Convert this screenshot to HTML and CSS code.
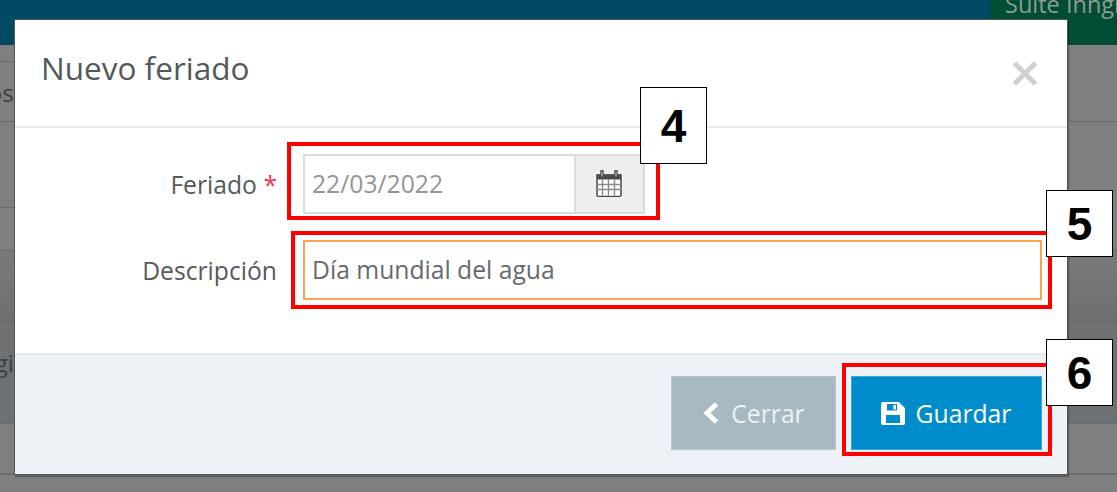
FILE: index.html
```html
<!DOCTYPE html>
<html lang="en">
<head>
  <meta charset="UTF-8">
  <title>Nuevo feriado</title>
  <link rel="stylesheet" href="styles.css">
</head>
<body>
  <div class="backdrop">
    <div class="topbar"><div class="suite">Suite Inngr</div></div>
    <div class="bg-row h16"><div class="stub"></div></div>
    <div class="bg-row h60 line"><span class="peek">Dos</span></div>
    <div class="bg-row h86"><div class="stub"></div></div>
    <div class="bg-row h43 line"></div>
    <div class="bg-row h71 fade"></div>
    <div class="bg-row h102 band line"><span class="peek peek-low">Regi</span></div>
    <div class="bg-row h51 foot"></div>
    <div class="bg-row h10"></div>
  </div>

  <div class="modal">
    <div class="modal-header">
      <h4>Nuevo feriado</h4>
      <svg class="close" width="26" height="27" viewBox="0 0 26 27"><path d="M2.500 3 23.500 24M23.500 3 2.500 24" stroke="#d0d0d0" stroke-width="5" fill="none"/></svg>
    </div>
    <div class="modal-body">
      <div class="form-row">
        <label>Feriado <span class="req">*</span></label>
        <div class="input-group">
          <div class="input muted">22/03/2022</div>
          <div class="addon">
            <svg class="cal" width="26" height="27" viewBox="0 0 26 27">
              <path d="M1 5h24v20a1.500 1.500 0 0 1-1.500 1.500h-21A1.500 1.500 0 0 1 1 25z" fill="#fff" stroke="#4a4a4a" stroke-width="1.500"/>
              <path d="M1 4.500h24v5H1z" fill="#4a4a4a"/>
              <path d="M6 1.500v6M20 1.500v6" stroke="#4a4a4a" stroke-width="3.500" stroke-linecap="round"/>
              <path d="M6 2v4M20 2v4" stroke="#9fc6dc" stroke-width="1.200" stroke-linecap="round"/>
              <path d="M1 14.500h24M1 19.500h24M6.500 9.500v16M12.500 9.500v16M18.500 9.500v16" stroke="#8a8a8a" stroke-width="1.400"/>
            </svg>
          </div>
        </div>
      </div>
      <div class="form-row">
        <label>Descripción</label>
        <div class="input focus">Día mundial del agua</div>
      </div>
    </div>
    <div class="modal-footer">
      <button class="btn btn-close">
        <svg width="18" height="24" viewBox="0 0 18 24"><path d="M14.500 3 5 12l9.500 9" stroke="#fff" stroke-width="5" fill="none"/></svg>
        Cerrar
      </button>
      <button class="btn btn-save">
        <svg width="24" height="23" viewBox="0 0 24 23">
          <path fill-rule="evenodd" fill="#fff" d="M2 0h16l6 6v15a2 2 0 0 1-2 2H2a2 2 0 0 1-2-2V2a2 2 0 0 1 2-2zM6 2v6.500h10V2zM12.500 3h2.500v4.500h-2.500zM5 13v8h14v-8z"/>
        </svg>
        Guardar
      </button>
    </div>
  </div>

  <!-- numbered callouts drawn over the dialog -->
  <div class="mark mark-4"></div>
  <div class="mark mark-5"></div>
  <div class="mark mark-6"></div>
  <div class="tag tag-4">4</div>
  <div class="tag tag-5">5</div>
  <div class="tag tag-6">6</div>
</body>
</html>
```

FILE: styles.css
```css
html, body { margin: 0; height: 492px; overflow: hidden; }
body { font-family: "Open Sans", sans-serif; background: #7f7f7f; color: #676a6c; }

.backdrop { height: 492px; overflow: hidden; }
.topbar { height: 45px; background: #004b63; display: flex; justify-content: flex-end; }
.suite {
  width: 112px;
  height: 45px;
  padding-left: 15px;
  background: #004d33;
  color: #8d9c94;
  font-size: 23.500px;
  line-height: 9px;
  overflow: hidden;
  white-space: nowrap;
}
.bg-row { box-sizing: border-box; overflow: hidden; }
.bg-row.line { border-bottom: 1px solid #6a6a6a; }
.stub { height: 100%; width: 15px; box-sizing: border-box; border-bottom: 1px solid #6a6a6a; }
.h16 { height: 17px; }
.h60 { height: 60px; }
.h86 { height: 86px; }
.h43 { height: 43px; }
.h71 { height: 71px; }
.h102 { height: 102px; }
.h51 { height: 51px; }
.h10 { height: 10px; }
.fade { background: linear-gradient(#7a7a7a, #6f6f6f); border-bottom: 1px solid #666; }
.band { background: #6d7173; }
.foot { border-bottom: 2px solid #6c6c6c; }
.peek {
  display: block;
  width: 14px;
  direction: rtl;
  overflow: hidden;
  white-space: nowrap;
  font-size: 24.500px;
  line-height: 34px;
  color: #3c4042;
  margin-top: 14px;
}
.peek-low { margin-top: 24px; }

.modal {
  position: absolute;
  left: 14px;
  top: 19px;
  width: 1052px;
  height: 454px;
  background: #fff;
  border: 1px solid #555;
  box-shadow: 1px 2px 1px rgba(0, 0, 0, .25);
  display: flex;
  flex-direction: column;
}
.modal-header {
  height: 106px;
  border-bottom: 2px solid #e9e9e9;
  display: flex;
  align-items: center;
  justify-content: space-between;
  padding: 0 29px 0 26px;
}
.modal-header h4 { margin: 0 0 11px; font-size: 31.500px; font-weight: 400; color: #52595c; }

.modal-body { flex: 1; padding: 26px 25px 0 0; display: flex; flex-direction: column; gap: 26px; }
.form-row { display: grid; grid-template-columns: 288px 1fr; align-items: center; }
.form-row label { text-align: right; padding-right: 26px; font-size: 24.700px; color: #555a5d; }
.req { color: #f0354a; }
.input {
  box-sizing: border-box;
  height: 60px;
  line-height: 56px;
  padding: 0 7px;
  border: 2px solid #dcdcdc;
  font-size: 24.700px;
  background: #fff;
}
.input.muted { color: #959595; flex: 1; }
.input.focus { border-color: #f7a54f; }
.input-group { display: flex; width: 342px; }
.addon {
  width: 69px;
  height: 60px;
  box-sizing: border-box;
  padding: 0 2px 2px 0;
  background: #eee;
  border: 2px solid #dcdcdc;
  border-left: 0;
  display: flex;
  align-items: center;
  justify-content: center;
}

.modal-footer {
  box-sizing: border-box;
  height: 121px;
  background: #edf2f6;
  border-top: 2px solid #e7ebf1;
  padding: 21px 25px 0 0;
  display: flex;
  justify-content: flex-end;
  gap: 15px;
}
.btn {
  height: 74px;
  border: 1px solid transparent;
  color: #fff;
  font-family: inherit;
  font-size: 24.700px;
  display: flex;
  align-items: center;
  justify-content: center;
  gap: 11px;
}
.btn-close { width: 165px; background: #a7b9c1; border-color: #b4c5cc; color: #edf2f4; }
.btn-save { width: 191px; background: #008cca; border-color: #3aa6d6; gap: 11px; padding-right: 7px; }

.mark { position: absolute; border: 4px solid #f00; box-sizing: border-box; }
.mark-4 { left: 287px; top: 142px; width: 373px; height: 78px; }
.mark-5 { left: 291px; top: 231px; width: 761px; height: 78px; }
.mark-6 { left: 842px; top: 363px; width: 210px; height: 93px; }

.tag {
  position: absolute;
  box-sizing: border-box;
  background: #fff;
  border: 1px solid #000;
  color: #000;
  font-family: "Liberation Sans", sans-serif;
  font-weight: 700;
  font-size: 46px;
  display: flex;
  align-items: center;
  justify-content: center;
}
.tag-4 { left: 640px; top: 87px; width: 67px; height: 77px; }
.tag-5 { left: 1046px; top: 190px; width: 67px; height: 67px; }
.tag-6 { left: 1046px; top: 339px; width: 67px; height: 67px; }
```
